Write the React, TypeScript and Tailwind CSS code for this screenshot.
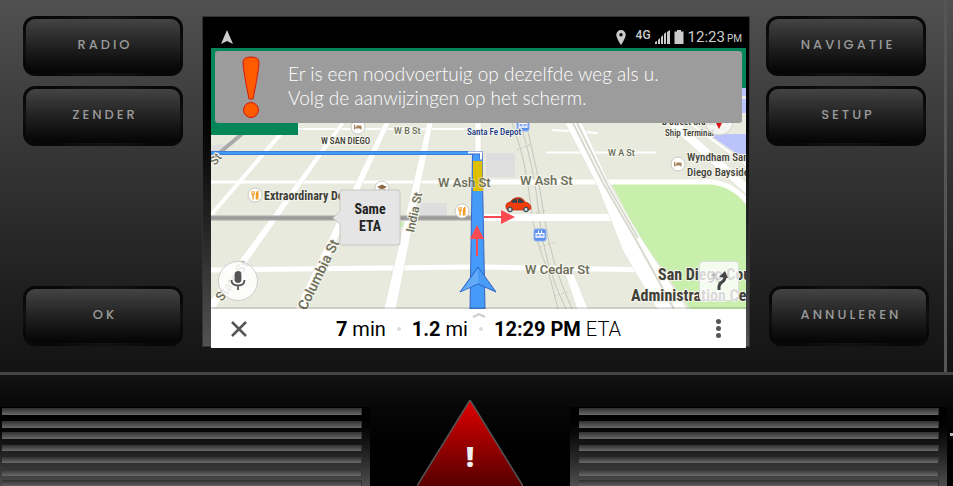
import type { ReactNode } from "react";

const CONDENSED =
  "[font-family:'Roboto_Condensed','Liberation_Sans_Narrow',Roboto,sans-serif]";
const ROBOTO = "[font-family:Roboto,sans-serif]";

function DashButton({ children }: { children: ReactNode }) {
  return (
    <button
      type="button"
      className="h-[60px] w-40 shrink-0 rounded-xl bg-[radial-gradient(ellipse_at_center,#3c3c3c_0%,#2c2c2c_35%,#080808_78%)] p-[3px]"
    >
      <span className="flex h-full items-center justify-center rounded-[9px] bg-linear-to-b from-[#444] to-[#050505] pb-0.5 pl-1 text-[13px] leading-4 font-medium tracking-[3px] text-[#999] [font-family:Poppins,Lato,sans-serif]">
        {children}
      </span>
    </button>
  );
}

function Poi({ x, y, kind }: { x: number; y: number; kind: "food" | "bed" | "school" }) {
  return (
    <g transform={`translate(${x} ${y})`}>
      <circle r="7" fill="#fff" stroke="#c9c9c2" strokeWidth="1" />
      {kind === "food" && (
        <g fill="#f39a1e">
          <path d="M-3.6-4v3q0 1 1 1.500V4.500h1.300V.5q1-.5 1-1.500v-3h-.8v3h-.5v-3h-.8v3h-.5v-3z" />
          <path d="M.8 4.500V-1Q1-4 3.500-4.200V4.500H2.200V1H2V4.500z" />
        </g>
      )}
      {kind === "bed" && (
        <path d="M-4-2.2h1.200V.2h1.200v-1.800h4q1.200 0 1.200 1.200v2.800h-1.200v-.8h-5.200v.8H-4z" fill="#a5825a" />
      )}
      {kind === "school" && (
        <path d="M-5-1 0-3.6 5-1 0 1.6zM-3 .8 0 2.4 3 .8V3L0 4.4-3 3z" fill="#8c6a45" />
      )}
    </g>
  );
}

function Transit({ x, y }: { x: number; y: number }) {
  return (
    <g transform={`translate(${x} ${y})`}>
      <rect x="-6" y="-6" width="12" height="12" rx="2" fill="#5b8ff0" stroke="#8fb0f5" />
      <path d="M-4.500-2h9v5h-9zM-2-4.500h1v3h-1zM1-4.500h1v3H1z" fill="#fff" />
      <path d="M-3.500-.8h3v1.500h-3zM.5-.8h3v1.500h-3zM-3.500 1.700h7v.5h-7z" fill="#5b8ff0" />
    </g>
  );
}

function MapDrawing() {
  return (
    <svg
      viewBox="211 48 535 261"
      preserveAspectRatio="xMidYMid slice"
      className={`block h-[261px] w-full ${ROBOTO}`}
      role="img"
      aria-label="Kaart"
    >
      <rect x="211" y="48" width="535" height="261" fill="#e9eade" />
      <path d="M486 153h29v24h-29zM420 203h27v14h-27zM211 145l15-1-12 12h-3z" fill="#dedede" />
      <path d="M400 222h5v5h-5z" fill="#c9efad" />
      <path d="M612 184H712Q732 184 746 206V309H690L660 265 640 240z" fill="#c9efad" />
      <path d="M708 134h38v22l-10-3zM742 88h4v8h-4zM742 99h4v14h-4z" fill="#bac3fb" />

      {/* rail lines */}
      <g fill="none" stroke="#c5c7bd" strokeWidth="1">
        <path d="M512 123Q526 160 530 200T548 270L558 309" />
        <path d="M520 123Q534 165 539 215T566 309" />
        <path d="M526 123Q538 170 544 215T572 309" />
        <path d="M517 150l14-6M524 185l12-4M532 215l14-5M540 247l16-5M548 272l14-5M554 296l16-5" strokeDasharray="2 2" />
      </g>

      {/* side streets */}
      <g fill="none" stroke="#fff">
        <path d="M298 129H472" strokeWidth="2" />
        <path d="M546 152.500H656M552 130l46 3" strokeWidth="2" />
        <path d="M211 182H474" strokeWidth="3" />
        <path d="M480 182H712Q732 184 748 202" strokeWidth="5" />
        <path d="M484 217.500H615" strokeWidth="7" />
        <path d="M211 270 472 267" strokeWidth="5" />
        <path d="M484 267 655 270" strokeWidth="5" />
        <path d="M290 123 211 215" strokeWidth="4" />
        <path d="M673 123 748 190" strokeWidth="8" />
        <path d="M690 123 748 166" strokeWidth="2" />
      </g>
      <g fill="#fff" stroke="#dcddd2" strokeWidth=".5">
        <path d="M340 123h5L216 307l-7 2v-7z" />
        <path d="M384 123h6L306 309H295z" />
        <path d="M427 123h6L396 309H384z" />
        <path d="M475 123h6v30h-6z" />
        <path d="M563 267h8l17 42h-11z" />
        <path d="M565 123h17l28 62 31 53 46 71h-30l-34-58-26-66z" />
      </g>
      <path d="M573 123 603 183 636 240 674 309M577 123 608 186 638 238" fill="none" stroke="#d9dacf" strokeWidth="2" />
      <path d="M243 133 211 160" stroke="#aaa" strokeWidth="4" fill="none" />
      <path d="M211 218H471" stroke="#a5a5a5" strokeWidth="5" />
      <path d="M211 218H471" stroke="#8f8f8f" strokeWidth="1" />

      {/* route */}
      <path d="M211 153H474" stroke="#3b62b8" strokeWidth="4" />
      <path d="M211 153H474" stroke="#429af5" strokeWidth="3" />
      <path d="M472.500 154H482L485 309H470z" fill="#449cf8" stroke="#3b62c4" />
      <path d="M473 161h9l1 30h-10z" fill="#dfc000" />
      <path d="M470 152.500h11v7" fill="none" stroke="#3b62c4" strokeWidth="3" />
      <path d="M468 152.500h13v7" fill="none" stroke="#fff" strokeWidth="2" />

      {/* text labels */}
      <g fill="#6c6d59" stroke="#f4f4ec" strokeWidth="2" paintOrder="stroke" fontWeight="500">
        <text x="394" y="134" fontSize="9">W B St</text>
        <text x="608" y="156" fontSize="9">W A St</text>
        <text x="438" y="187" fontSize="13" strokeOpacity=".5">W Ash St</text>
        <text x="520" y="185" fontSize="13">W Ash St</text>
        <text x="525" y="274" fontSize="13">W Cedar St</text>
        <text transform="translate(414 233) rotate(-78)" fontSize="12">India St</text>
        <text transform="translate(306 311) rotate(-64)" fontSize="14">Columbia St</text>
        <text transform="translate(222 302) rotate(-54)" fontSize="13">State St</text>
        <text transform="translate(215 166) rotate(-50)" fontSize="12">St</text>
      </g>
      <Transit x={523} y={125} />
      <Transit x={540} y={235} />
      <g className={CONDENSED} fill="#3f4038" stroke="#f4f4ec" strokeWidth="2" paintOrder="stroke" fontWeight="700">
        <text x="321" y="144" fontSize="9" fontWeight="500">W SAN DIEGO</text>
        <text x="264" y="200" fontSize="12">Extraordinary De</text>
        <text x="687" y="161" fontSize="11" fontWeight="500">Wyndham San</text>
        <text x="687" y="176" fontSize="11" fontWeight="500">Diego Bayside</text>
        <text x="662" y="125" fontSize="9">B Street Cruise</text>
        <text x="665" y="136" fontSize="9" fontWeight="500">Ship Terminal</text>
        <text x="658" y="280" fontSize="16">San Diego Cou</text>
        <text x="631" y="301" fontSize="16">Administration Cen</text>
        <text x="467" y="135" fontSize="9" fontWeight="500" fill="#203a86">Santa Fe Depot</text>
      </g>
      <Poi x={358} y={127} kind="bed" />
      <Poi x={678} y={164} kind="bed" />
      <Poi x={255} y={195} kind="food" />
      <Poi x={382} y={188} kind="school" />
      <Poi x={462} y={211} kind="food" />
      <circle cx="719" cy="121" r="14" fill="#f7f7f5" fillOpacity=".8" stroke="#d5d5d0" />
      <path d="M715 121h8l-4 8z" fill="#e01212" />

      {/* current position */}
      <path d="m478 267 18 25-18-8-18 8z" fill="#4b9cf7" stroke="#2d63c4" />
      <path d="m478 269-16 22 16-8z" fill="#63acfa" />
      <path d="m477 225 7 14h-6v17h-2v-17h-6zM515 217l-14 7v-6h-17v-2h17v-6z" fill="#fb4a52" />

      {/* car */}
      <g transform="translate(505 197)">
        <path d="M1 10.500Q0 6 5 5 8 .5 13 .5 18 .5 20 5q6 1 6 6.500Q26 13 22 13H4Q1 13 1 10.500z" fill="#f23c0c" stroke="#a51d08" strokeWidth=".6" />
        <path d="M6 5.500Q8 2 12 1.600V6zM13 1.600Q17 1 19 5.800L13 6z" fill="#34424d" />
        <circle cx="5" cy="12.500" r="2.800" fill="#46525c" />
        <circle cx="21" cy="12.500" r="2.800" fill="#46525c" />
        <circle cx="5" cy="12.500" r="1.400" fill="#d8e0e5" />
        <circle cx="21" cy="12.500" r="1.400" fill="#d8e0e5" />
      </g>

      {/* alternative route callout */}
      <path d="M342 190h56q2 0 2 2v51q0 2-2 2h-56q-2 0-2-2V224l-7-6 7-7V192q0-2 2-2z" fill="#e5e5e5" stroke="#c6c6c2" />
      <g className={CONDENSED} fontSize="14" fontWeight="700" fill="#252525" textAnchor="middle">
        <text x="370" y="214">Same</text>
        <text x="370" y="231">ETA</text>
      </g>

      {/* turn banner */}
      <path d="M211 48h535v40h-4V60H298v75h-87z" fill="#048659" />
      <path d="M211 307h535v2H211z" fill="#000" fillOpacity=".12" />
    </svg>
  );
}

function StatusBar() {
  return (
    <div className={`flex h-8 items-center justify-between bg-black pr-1 pl-2 pt-2 text-[#ccc] ${ROBOTO}`}>
      <svg viewBox="0 0 16 16" className="size-4" fill="currentColor" aria-hidden="true">
        <path d="M8 1 14 15 8 12 2 15z" />
      </svg>
      <div className="flex items-center">
        <svg viewBox="0 0 10 15" className="mr-2.5 h-[15px] w-2.5" fill="currentColor" aria-hidden="true">
          <path fillRule="evenodd" d="M5 0a4.700 4.700 0 0 1 4.700 4.700C9.700 8 5 15 5 15S.3 8 .3 4.700A4.700 4.700 0 0 1 5 0zM5 3a1.700 1.700 0 1 0 0 3.400A1.700 1.700 0 0 0 5 3z" />
        </svg>
        <span className="mr-1 pb-1 text-[12px] leading-3 font-medium">4G</span>
        <svg viewBox="0 0 15 14" className="mr-1 h-3.5 w-[15px]" fill="currentColor" aria-hidden="true">
          <path d="M0 12l2-1v3H0zM3 10l2-2v6H3zM6 7l2-2v9H6zM9 4l2-2v12H9zM12 2l3-2v14h-3z" />
        </svg>
        <svg viewBox="0 0 10 14" className="mr-1 h-3.5 w-2.5" fill="currentColor" aria-hidden="true">
          <path d="M3 0h4v1.500h2.500V14H.5V1.500H3z" />
        </svg>
        <span className="text-[15px] leading-4">12:23</span>
        <span className="ml-0.5 pt-1 text-[10px] leading-3">PM</span>
      </div>
    </div>
  );
}

function Alert() {
  return (
    <div
      role="alert"
      className="absolute inset-x-1 top-[3px] flex h-[72px] items-center rounded-[3px] bg-[#9c9c9c] text-white"
    >
      <svg viewBox="0 0 18 62" className="mr-7 ml-[27px] h-[62px] w-[18px] shrink-0" fill="#ff5a00" stroke="#d21a10" strokeWidth="1" aria-hidden="true">
        <path d="M1 6Q1 1 9 1t8 5q0 8-6 37H7Q1 14 1 6z" />
        <circle cx="9" cy="54" r="7.500" />
      </svg>
      <p className="pb-0.5 text-[19px] leading-6 font-light [font-family:Avenir,Lato,sans-serif]">
        Er is een noodvoertuig op dezelfde weg als u.
        <br />
        Volg de aanwijzingen op het scherm.
      </p>
    </div>
  );
}

function TripBar() {
  return (
    <div className={`relative flex h-[39px] items-center justify-between bg-white px-5 text-[20px] leading-6 text-black ${ROBOTO}`}>
      <button type="button" aria-label="Sluiten">
        <svg viewBox="0 0 16 16" className="size-4" stroke="#555" strokeWidth="2.500" aria-hidden="true">
          <path d="M1 1 15 15M15 1 1 15" />
        </svg>
      </button>
      <p className="flex items-center gap-[11px]">
        <span><b className="font-bold">7</b> min</span>
        <i className="size-1 rounded-full bg-[#ddd]" />
        <span><b className="font-bold">1.2</b> mi</span>
        <i className="size-1 rounded-full bg-[#ddd]" />
        <span><b className="font-bold">12:29 PM</b> <span className="font-light">ETA</span></span>
      </p>
      <button type="button" aria-label="Meer" className="flex w-4 flex-col items-center gap-0.5">
        <i className="size-[5px] rounded-full bg-[#555]" />
        <i className="size-[5px] rounded-full bg-[#555]" />
        <i className="size-[5px] rounded-full bg-[#555]" />
      </button>
      <svg viewBox="0 0 14 6" className="absolute top-[3px] left-1/2 h-1.5 w-3.5 -translate-x-1/2" fill="none" stroke="#ccc" strokeWidth="2" aria-hidden="true">
        <path d="M1 5 7 2 13 5" />
      </svg>
    </div>
  );
}

function Screen() {
  return (
    <div className="mr-4 ml-[19px] h-[331px] min-w-0 flex-1 border border-[#333] bg-linear-to-b from-black from-10% to-[#535353] pr-[3px] pl-2">
      <StatusBar />
      <div className="relative -mt-px overflow-hidden">
        <MapDrawing />
        <Alert />
        <button
          type="button"
          aria-label="Spraak"
          className="absolute bottom-2 left-[7px] flex size-10 items-center justify-center rounded-full border border-[#ccc] bg-white/85"
        >
          <svg viewBox="0 0 16 20" className="h-5 w-4" fill="none" stroke="#555" strokeWidth="1.800" aria-hidden="true">
            <rect x="5.500" y="1" width="5" height="10" rx="2.500" fill="#555" />
            <path d="M1.500 9q0 5.500 6.500 5.500T14.500 9M8 14.500V19" />
          </svg>
        </button>
        <button
          type="button"
          aria-label="Routes"
          className="absolute right-[7px] bottom-2 flex size-10 items-center justify-center rounded-sm border border-[#ddd] bg-white/80"
        >
          <svg viewBox="0 0 24 24" className="size-6" fill="none" aria-hidden="true">
            <path d="M12 14Q12 11 7 9V6" stroke="#bbb" strokeWidth="2" strokeDasharray="2 1" />
            <path d="M4 7l3-4 3 4z" fill="#bbb" />
            <path d="M12 21v-3q0-3 3-5t3-5" stroke="#444" strokeWidth="3" />
            <path d="M12 8l6-6 3 7z" fill="#444" />
          </svg>
        </button>
      </div>
      <TripBar />
    </div>
  );
}

const SLATS = [
  "mt-px h-[7px]",
  "mt-1.5 h-[7px]",
  "mt-1 h-[7px]",
  "mt-1.5 h-1.5",
  "mt-1.5 h-1.5",
  "mt-1.5 h-[7px]",
  "mt-1 h-[7px]",
];

function Vent({ className }: { className: string }) {
  return (
    <div className={`mt-8 h-20 min-w-0 flex-1 bg-linear-to-b from-black to-[#505050] ${className}`}>
      {SLATS.map((slat, i) => (
        <div key={i} className={`border-r border-[#333] bg-linear-to-b from-[#303030] to-[#6a6a6a] ${slat}`} />
      ))}
    </div>
  );
}

export default function App() {
  return (
    <main className="flex h-screen flex-col overflow-hidden bg-black">
      <section className="flex h-[375px] shrink-0 border-b-[3px] border-[#444] bg-linear-to-b from-[#505050] to-[#131313]">
        <div className="flex min-w-0 flex-1 pt-4 pl-[23px]">
          <div className="flex flex-col gap-2.5">
            <DashButton>RADIO</DashButton>
            <DashButton>ZENDER</DashButton>
            <div className="mt-[130px]">
              <DashButton>OK</DashButton>
            </div>
          </div>
          <Screen />
          <div className="flex w-[178px] shrink-0 flex-col gap-2.5">
            <DashButton>NAVIGATIE</DashButton>
            <DashButton>SETUP</DashButton>
            <div className="mt-[130px] pl-[3px]">
              <DashButton>ANNULEREN</DashButton>
            </div>
          </div>
        </div>
        <div className="w-[9px] border-l-[3px] border-[#555]" />
      </section>
      <section className="flex min-h-0 flex-1 items-start overflow-hidden bg-linear-to-b from-[#121212] to-black">
        <Vent className="pr-2 pl-0.5" />
        <button type="button" aria-label="Alarmlichten" className="relative mt-[25px] flex w-[200px] shrink-0 justify-center">
          <svg viewBox="0 0 106 86" className="h-[86px] w-[106px]" aria-hidden="true">
            <defs>
              <linearGradient id="hazard" x1="0" y1="0" x2="0" y2="1">
                <stop offset="0" stopColor="#e00000" />
                <stop offset="1" stopColor="#560000" />
              </linearGradient>
            </defs>
            <path d="M0 86 53 0 106 86" fill="url(#hazard)" stroke="#555" strokeWidth="1.500" />
          </svg>
          <span className="absolute inset-x-0 top-10 text-[28px] leading-8 font-extrabold text-[#eee] [font-family:'Open_Sans',sans-serif]">!</span>
        </button>
        <Vent className="pr-2 pl-[9px]" />
        <div className="mt-[58px] w-1.5 shrink-0 pl-[3px]">
          <div className="h-[3px] bg-[#bbb]" />
        </div>
      </section>
    </main>
  );
}
